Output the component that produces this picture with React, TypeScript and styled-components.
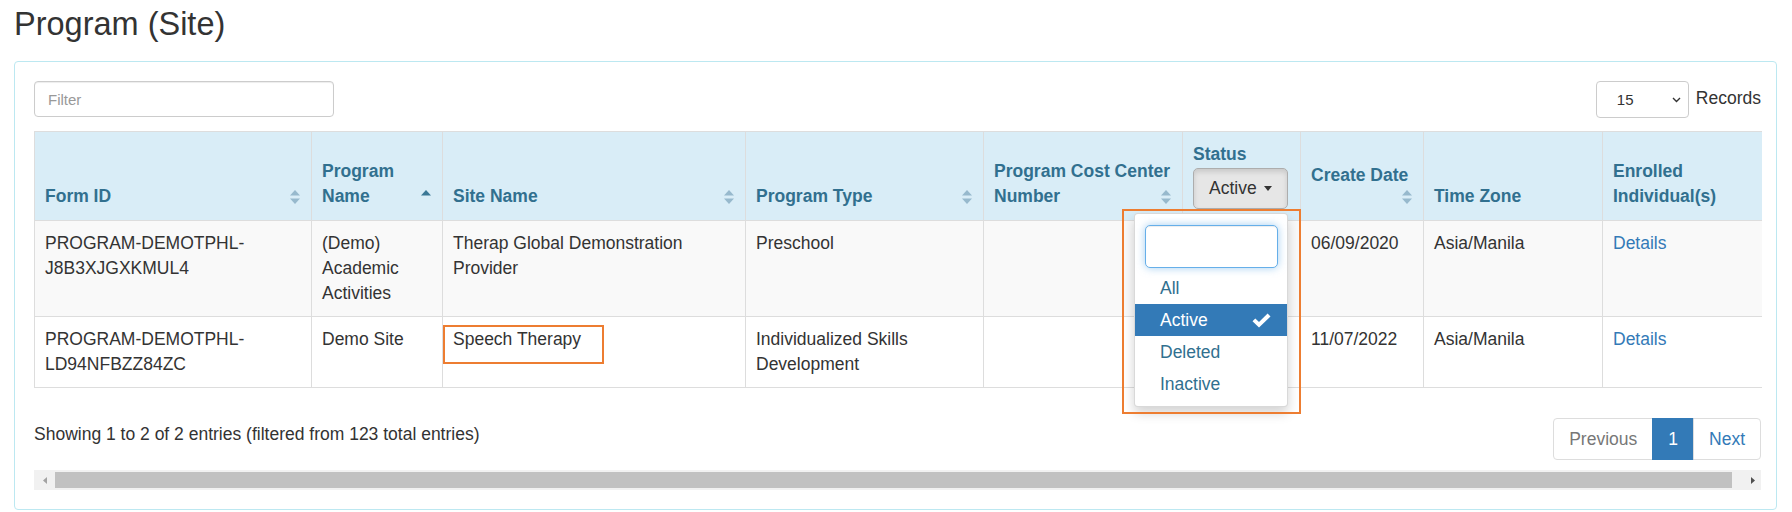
import React from 'react';
import styled, { createGlobalStyle } from 'styled-components';

const GlobalStyle = createGlobalStyle`
  body {
    margin: 0;
    background: #fff;
    font-family: "Liberation Sans", Arial, sans-serif;
    font-size: 17.5px;
    line-height: 25px;
    color: #333;
  }
  * {
    box-sizing: border-box;
  }
`;

const Page = styled.div`
  padding: 6px 15px 0 14px;
`;

const Title = styled.h1`
  margin: 0 0 19px;
  font-size: 32.5px;
  line-height: 36px;
  font-weight: 400;
  color: #333;
`;

const Card = styled.div`
  border: 1px solid #bce8f1;
  border-radius: 4px;
  padding: 19px 15px 19px 19px;
`;

const Toolbar = styled.div`
  display: flex;
  justify-content: space-between;
  align-items: flex-start;
  margin-bottom: 13px;
`;

const FilterInput = styled.input`
  width: 300px;
  height: 36px;
  padding: 0 13px;
  font-family: inherit;
  font-size: 15px;
  color: #555;
  border: 1px solid #ccc;
  border-radius: 4px;
  box-shadow: inset 0 1px 1px rgba(0, 0, 0, 0.075);
  outline: none;

  &::placeholder {
    color: #999;
  }
`;

const LengthControl = styled.div`
  display: flex;
  align-items: flex-start;
`;

const FakeSelect = styled.div`
  width: 93px;
  height: 37px;
  display: flex;
  align-items: center;
  justify-content: space-between;
  padding: 0 7px 0 20px;
  font-size: 15px;
  color: #333;
  border: 1px solid #ccc;
  border-radius: 4px;
  background: #fff;
`;

const LengthLabel = styled.span`
  margin: 5px 0 0 7px;
  line-height: 25px;
`;

const Table = styled.table`
  width: 100%;
  table-layout: fixed;
  border-collapse: collapse;
`;

const HeadCell = styled.th<{ $middle?: boolean }>`
  position: relative;
  background: #d9edf7;
  color: #31708f;
  font-weight: 700;
  text-align: left;
  vertical-align: ${(p) => (p.$middle ? 'middle' : 'bottom')};
  padding: 10px 8px 11px 10px;
  border: 1px solid #ddd;

  &:last-child {
    border-right: 0;
  }
`;

const Row = styled.tr<{ $striped?: boolean }>`
  background: ${(p) => (p.$striped ? '#f9f9f9' : '#fff')};
`;

const Cell = styled.td`
  vertical-align: top;
  padding: 10px;
  border: 1px solid #ddd;

  &:last-child {
    border-right: 0;
  }
`;

const DetailsLink = styled.a`
  color: #337ab7;
  text-decoration: none;
`;

const SortIcon = styled.svg`
  position: absolute;
  right: 11px;
  bottom: 15px;
  width: 10px;
  height: 16px;
`;

const StatusLabel = styled.div`
  margin-bottom: 1px;
`;

const ButtonGroup = styled.div`
  position: relative;
  display: inline-block;
`;

const StatusButton = styled.button`
  display: flex;
  align-items: center;
  height: 41px;
  width: 95px;
  padding: 0 15px;
  font-family: inherit;
  font-size: 17.5px;
  color: #333;
  background: #e6e6e6;
  border: 1px solid #adadad;
  border-radius: 5px;
  box-shadow: inset 0 3px 5px rgba(0, 0, 0, 0.125);
`;

const Caret = styled.span`
  margin-left: 7px;
  width: 0;
  height: 0;
  border-top: 5px solid #333;
  border-left: 4.5px solid transparent;
  border-right: 4.5px solid transparent;
`;

const Dropdown = styled.div`
  position: absolute;
  top: calc(100% + 4px);
  right: 0;
  width: 154px;
  padding: 6px 0 6px;
  background: #fff;
  border: 1px solid rgba(0, 0, 0, 0.15);
  border-radius: 4px;
  box-shadow: 0 6px 12px rgba(0, 0, 0, 0.175);
  font-weight: 400;
  z-index: 10;

  &::before {
    content: '';
    position: absolute;
    top: -5px;
    left: -13px;
    right: -14px;
    bottom: -8px;
    border: 2px solid #ed7d31;
    pointer-events: none;
  }
`;

const SearchBox = styled.div`
  padding: 5px 9px 4px 10px;
`;

const SearchInput = styled.input`
  display: block;
  width: 100%;
  height: 43px;
  border: 1px solid #66afe9;
  border-radius: 5px;
  outline: none;
  box-shadow: inset 0 1px 1px rgba(0, 0, 0, 0.075), 0 0 8px rgba(102, 175, 233, 0.6);
`;

const MenuItem = styled.div<{ $selected?: boolean }>`
  position: relative;
  padding: 3.5px 25px;
  line-height: 25px;
  color: ${(p) => (p.$selected ? '#fff' : '#31708f')};
  background: ${(p) => (p.$selected ? '#337ab7' : 'transparent')};
`;

const CheckMark = styled.svg`
  position: absolute;
  right: 16px;
  top: 9px;
  width: 19px;
  height: 15px;
`;

const Annotated = styled.span`
  position: relative;
  display: inline-block;

  &::after {
    content: '';
    position: absolute;
    left: -10px;
    top: -2px;
    width: 157px;
    height: 35px;
    border: 2px solid #ed7d31;
  }
`;

const Footer = styled.div`
  display: flex;
  justify-content: space-between;
  align-items: flex-start;
  margin-top: 30px;
`;

const Info = styled.div`
  padding-top: 4px;
`;

const Pager = styled.ul`
  display: flex;
  margin: 0;
  padding: 0;
  list-style: none;
`;

const PageLink = styled.li<{ $active?: boolean; $disabled?: boolean }>`
  height: 42px;
  padding: 8px 15px;
  margin-left: -1px;
  border: 1px solid ${(p) => (p.$active ? '#337ab7' : '#ddd')};
  background: ${(p) => (p.$active ? '#337ab7' : '#fff')};
  color: ${(p) => (p.$active ? '#fff' : p.$disabled ? '#777' : '#337ab7')};

  &:first-child {
    margin-left: 0;
    border-radius: 4px 0 0 4px;
  }
  &:last-child {
    border-radius: 0 4px 4px 0;
  }
`;

const ScrollTrack = styled.div`
  display: flex;
  align-items: stretch;
  height: 20px;
  margin-top: 10px;
  background: #f1f1f1;
`;

const ScrollArrow = styled.div<{ $width: number }>`
  width: ${(p) => p.$width}px;
  display: flex;
  align-items: center;
  justify-content: center;
`;

const ScrollThumb = styled.div`
  flex: 1;
  margin: 2px 12px 2px 0;
  background: #c1c1c1;
`;

const Sort: React.FC<{ dir?: 'asc' }> = ({ dir }) => (
  <SortIcon viewBox="0 0 10 16">
    {dir === 'asc' ? (
      <polygon points="0,6.5 5,1 10,6.5" fill="#3b7896" />
    ) : (
      <>
        <polygon points="0,6.5 5,1 10,6.5" fill="#97b9cd" />
        <polygon points="0,9.5 10,9.5 5,15" fill="#97b9cd" />
      </>
    )}
  </SortIcon>
);

const columns = [277, 131, 303, 238, 199, 118, 123, 179, 159];

const rows = [
  {
    id: 'PROGRAM-DEMOTPHL-J8B3XJGXKMUL4',
    program: '(Demo) Academic Activities',
    site: 'Therap Global Demonstration Provider',
    type: 'Preschool',
    date: '06/09/2020',
  },
  {
    id: 'PROGRAM-DEMOTPHL-LD94NFBZZ84ZC',
    program: 'Demo Site',
    site: 'Speech Therapy',
    type: 'Individualized Skills Development',
    date: '11/07/2022',
  },
];

const App: React.FC = () => (
  <Page>
    <GlobalStyle />
    <Title>Program (Site)</Title>
    <Card>
      <Toolbar>
        <FilterInput placeholder="Filter" />
        <LengthControl>
          <FakeSelect>
            <span>15</span>
            <svg width="9" height="6" viewBox="0 0 9 6">
              <path d="M1 1l3.5 3.5L8 1" stroke="#333" strokeWidth="1.4" fill="none" />
            </svg>
          </FakeSelect>
          <LengthLabel>Records</LengthLabel>
        </LengthControl>
      </Toolbar>

      <Table>
        <colgroup>
          {columns.map((w, i) => (
            <col key={i} style={{ width: w }} />
          ))}
        </colgroup>
        <thead>
          <tr>
            <HeadCell>
              Form ID
              <Sort />
            </HeadCell>
            <HeadCell>
              Program Name
              <Sort dir="asc" />
            </HeadCell>
            <HeadCell>
              Site Name
              <Sort />
            </HeadCell>
            <HeadCell>
              Program Type
              <Sort />
            </HeadCell>
            <HeadCell>
              Program Cost Center Number
              <Sort />
            </HeadCell>
            <HeadCell>
              <StatusLabel>Status</StatusLabel>
              <ButtonGroup>
                <StatusButton>
                  Active
                  <Caret />
                </StatusButton>
                <Dropdown>
                  <SearchBox>
                    <SearchInput />
                  </SearchBox>
                  <MenuItem>All</MenuItem>
                  <MenuItem $selected>
                    Active
                    <CheckMark viewBox="0 0 19 15">
                      <path d="M0.5 8.2L3.3 5.4L7 9.1L15.6 0.5L18.5 3.4L7 14.6Z" fill="#fff" />
                    </CheckMark>
                  </MenuItem>
                  <MenuItem>Deleted</MenuItem>
                  <MenuItem>Inactive</MenuItem>
                </Dropdown>
              </ButtonGroup>
            </HeadCell>
            <HeadCell $middle>
              Create Date
              <Sort />
            </HeadCell>
            <HeadCell>Time Zone</HeadCell>
            <HeadCell>Enrolled Individual(s)</HeadCell>
          </tr>
        </thead>
        <tbody>
          {rows.map((r, i) => (
            <Row key={r.id} $striped={i % 2 === 0}>
              <Cell>{r.id}</Cell>
              <Cell>{r.program}</Cell>
              <Cell>{i === 1 ? <Annotated>{r.site}</Annotated> : r.site}</Cell>
              <Cell>{r.type}</Cell>
              <Cell />
              <Cell />
              <Cell>{r.date}</Cell>
              <Cell>Asia/Manila</Cell>
              <Cell>
                <DetailsLink href="#">Details</DetailsLink>
              </Cell>
            </Row>
          ))}
        </tbody>
      </Table>

      <Footer>
        <Info>Showing 1 to 2 of 2 entries (filtered from 123 total entries)</Info>
        <Pager>
          <PageLink $disabled>Previous</PageLink>
          <PageLink $active>1</PageLink>
          <PageLink>Next</PageLink>
        </Pager>
      </Footer>

      <ScrollTrack>
        <ScrollArrow $width={21}>
          <svg width="4" height="7" viewBox="0 0 4 7">
            <polygon points="4,0 0,3.5 4,7" fill="#a3a3a3" />
          </svg>
        </ScrollArrow>
        <ScrollThumb />
        <ScrollArrow $width={17}>
          <svg width="4" height="7" viewBox="0 0 4 7">
            <polygon points="0,0 4,3.5 0,7" fill="#505050" />
          </svg>
        </ScrollArrow>
      </ScrollTrack>
    </Card>
  </Page>
);

export default App;
